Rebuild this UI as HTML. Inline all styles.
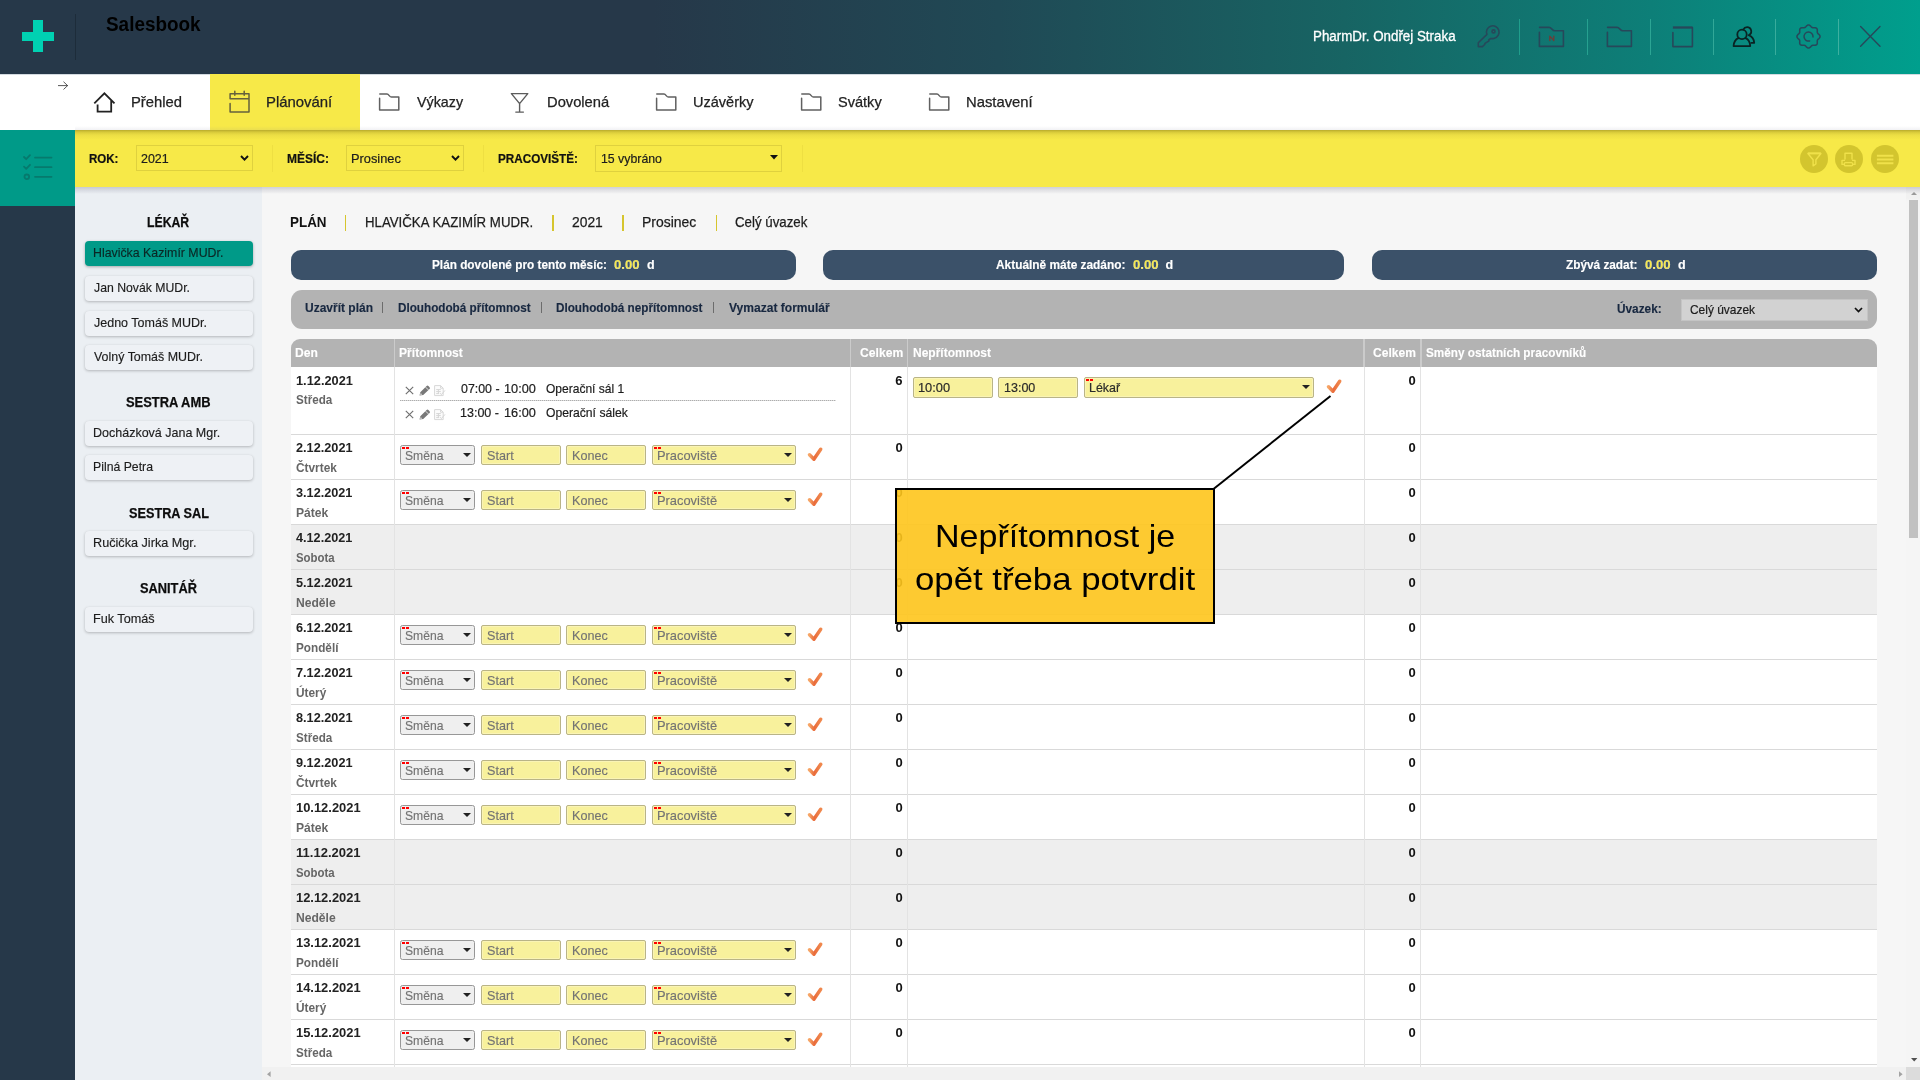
<!DOCTYPE html>
<html lang="cs"><head><meta charset="utf-8"><title>Salesbook</title>
<style>
*{box-sizing:border-box;margin:0;padding:0}
html,body{width:1920px;height:1080px;overflow:hidden;background:#f6f6f6}
body{font-family:"Liberation Sans",sans-serif;font-size:13px;color:#222}
#app{position:relative;width:1920px;height:1080px;overflow:hidden;will-change:transform}
.abs{position:absolute}
.t{position:absolute;white-space:nowrap;line-height:1;transform:translateY(-50%);transform-origin:0 50%}
svg{position:absolute;overflow:visible}

/* top header */
#hdr{position:absolute;left:0;top:0;width:1920px;height:74px;background:linear-gradient(90deg,#263849 0%,#263849 34%,#204955 52%,#176463 70%,#0d7f78 86%,#009f8d 100%)}
#hdr .sep{position:absolute;top:19px;width:1.4px;height:36px;background:rgba(70,205,185,.5)}
.brand{color:#000}
.user{color:#fff;-webkit-text-stroke:.3px #fff}

/* nav */
#nav{position:absolute;left:0;top:74px;width:1920px;height:56px;background:#fff;border-top:1px solid #d3dae0}
#nav .act{position:absolute;left:210px;top:-1px;width:150px;height:56px;background:#f7e948}
#nav:after{content:"";position:absolute;left:75px;right:0;bottom:0;height:4px;background:linear-gradient(rgba(120,120,150,0),rgba(120,120,150,.10))}
.nv{color:#222;-webkit-text-stroke:.25px #222}

/* filter bar */
#fbar{position:absolute;left:75px;top:130px;width:1845px;height:57px;background:#f7e948}
#fbar:before{content:"";position:absolute;left:0;top:0;width:100%;height:10px;background:linear-gradient(#b7a92c 0,#c9bb33 10%,#ded03d 28%,#ecde44 50%,#f7e948 100%)}
#tealblk{position:absolute;left:0;top:130px;width:75px;height:76px;background:#009a88}
#darkside{position:absolute;left:0;top:205.5px;width:75px;height:875px;background:#263849}
.fl{color:#111;-webkit-text-stroke:.2px #111}
.fsel{position:absolute;top:15px;height:26px;border:1px solid #dfd13e;background:#f7e948}
.fs{color:#1c1c1c;-webkit-text-stroke:.2px #1c1c1c}
.fdiv{position:absolute;top:15px;width:1px;height:27px;background:#eedf42}
.circ{position:absolute;top:15px;width:28px;height:28px;border-radius:50%;background:#d3c52e}

/* left list panel */
#lpanel{position:absolute;left:75px;top:187px;width:187px;height:893px;background:#ebeff3}
.lh{color:#0c0c0c;-webkit-text-stroke:.25px #0c0c0c}
.lb{position:absolute;left:85px;width:168px;height:25px;border-radius:4px;background:#eef1f5;box-shadow:0 1px 3px rgba(0,0,0,.24),0 0 1px rgba(0,0,0,.08)}
.lb.sel{background:#009a88;box-shadow:0 1px 3px rgba(0,0,0,.3)}
.lbt{color:#1c1c1c;-webkit-text-stroke:.15px #1c1c1c}
.lbt.s{color:#0b2725;-webkit-text-stroke:.15px #0b2725}

/* content */
#content{position:absolute;left:262px;top:187px;width:1644px;height:893px;background:#f6f6f6}
.pt{color:#1c1c1c;-webkit-text-stroke:.25px #1c1c1c}
.ptb{color:#111}
.psep{position:absolute;top:214.5px;width:1.8px;height:16.5px;background:#d6c52e}
.ibar{position:absolute;top:250px;height:30px;border-radius:10px;background:#3b5169}
.ib{color:#fff;-webkit-text-stroke:.15px #fff}
.ib.y{color:#f7e948}
#abar{position:absolute;left:291px;top:290px;width:1586px;height:39px;border-radius:11px;background:#b3b3b3}
.ab{color:#182840;-webkit-text-stroke:.15px #182840}
.absep{font-size:12px;color:#555}
#usel{position:absolute;left:1681px;top:299px;width:187px;height:22px;background:#d2d2d2;border:1px solid #c4c4c4}

/* table */
#thead{position:absolute;left:291px;top:339px;width:1586px;height:28px;background:#b3b3b3;border-radius:9px 9px 0 0}
.th{color:#fff;-webkit-text-stroke:.12px #fff}
.thsep{position:absolute;top:339px;width:1.6px;height:28px;background:#cbcbcb}
.row{position:absolute;left:291px;width:1586px;background:#fff;border-bottom:1px solid #d9d9d9}
.row.we{background:#eeeeee}
.vl{position:absolute;top:367px;width:1px;height:700px;background:#e3e3e3}
.dt{color:#222}
.dn{color:#666}
.tot{color:#111}
.inp{position:absolute;height:20px;background:#f8f19c;border:1px solid #b9b487;border-radius:2px;box-shadow:inset 0 0 0 1px rgba(255,255,255,.25)}
.it{color:#737373;-webkit-text-stroke:.15px #737373}
.it.v{color:#2a2a2a;-webkit-text-stroke:.2px #2a2a2a}
.ssel{position:absolute;height:20px;background:#efefef;border:1px solid #979797;border-radius:2.5px}
.req{position:absolute;left:1px;top:1px;width:7px;height:2px;background:linear-gradient(90deg,#f00 0,#f00 3px,transparent 3px,transparent 4px,#f00 4px)}
.dd{position:absolute;right:3px;top:7px;width:0;height:0;border-left:4px solid transparent;border-right:4px solid transparent;border-top:4.5px solid #222}
.sh{color:#1c1c1c;-webkit-text-stroke:.2px #1c1c1c}

/* scrollbars */
#vsb{position:absolute;left:1906px;top:187px;width:14px;height:880px;background:linear-gradient(#f1f1f1 0,#f1f1f1 11px,#f5f5f5 14px,#f5f5f5 100%)}
#vsb .th2{position:absolute;left:3px;top:13px;width:9px;height:338px;background:#c1c1c1}
#hsb{position:absolute;left:262px;top:1067px;width:1658px;height:13px;background:#f1f1f1}
#corner{position:absolute;left:1906px;top:1067px;width:14px;height:13px;background:#dcdcdc}

/* overlay callout */
#callout{position:absolute;left:895px;top:488px;width:320px;height:136px;background:rgba(254,197,28,.90);border:2px solid #000}
.co{color:#000}

.brand{font-size:20px;font-weight:bold;}
.user{font-size:14px;}
.nv{font-size:15px;}
.fl{font-size:12.5px;font-weight:bold;}
.fs{font-size:13px;}
.lh{font-size:14.5px;font-weight:bold;}
.lbt{font-size:13px;}
.pt{font-size:15px;}
.ptb{font-size:15px;font-weight:bold;}
.ib{font-size:12.5px;font-weight:bold;}
.ab{font-size:12.5px;font-weight:bold;}
.th{font-size:12.5px;font-weight:bold;}
.dt{font-size:13px;font-weight:bold;}
.dn{font-size:13px;font-weight:bold;}
.tot{font-size:13px;font-weight:bold;}
.it{font-size:13.5px;}
.sh{font-size:13px;}
.co{font-size:30.5px;}
</style></head>
<body>
<div id="app">
<div id="hdr">
<div class="abs" style="left:33px;top:20px;width:10px;height:32px;background:#00d1b2"></div>
<div class="abs" style="left:22px;top:32px;width:32px;height:9px;background:#00d1b2"></div>
<div class="abs" style="left:75px;top:14px;width:1px;height:46px;background:#1d2c3a"></div>
<span class="t brand" style="left:106.43px;top:24px;transform:translateY(-50%) scaleX(0.9457);">Salesbook</span>
<span class="t user" style="left:1313.33px;top:36.3px;transform:translateY(-50%) scaleX(0.9544);">PharmDr. Ondřej Straka</span>
<div class="sep" style="left:1518.8px;background:rgb(32, 158, 140)"></div>
<div class="sep" style="left:1586.8px;background:rgb(38, 161, 144)"></div>
<div class="sep" style="left:1649.8px;background:rgb(44, 165, 148)"></div>
<div class="sep" style="left:1712.8px;background:rgb(50, 168, 152)"></div>
<div class="sep" style="left:1774.8px;background:rgb(56, 172, 156)"></div>
<div class="sep" style="left:1837.8px;background:rgb(62, 176, 160)"></div>
<svg style="left:1476px;top:24px" width="26" height="25" viewBox="0 0 26 25" fill="none" stroke="#27485a" stroke-width="1.6" stroke-linecap="round" stroke-linejoin="round"><path d="M10.9 10.4 A6.3 6.3 0 1 1 18.4 14.15 Q16.2 14.9 14.7 14.5 L12.7 15.9 L13 16.9 L9 19.4 L8.7 20.5 L6.4 22.6 H2.3 V18.8 Z"/><circle cx="17.5" cy="7.4" r="1.5"/></svg>
<svg style="left:1538px;top:26px" width="27" height="22" viewBox="0 0 27 22" fill="none" stroke="#27485a" stroke-width="1.6" stroke-linecap="round" stroke-linejoin="round"><path d="M1.4 6.2 V20.4 H25.4 V4.8 H16.6 C14.2 4.8 13.6 1.4 11 1.4 H1.6"/><path d="M11.8 14.5 V10.1 L15.8 14.5 V10.1" stroke="#6e3d38" stroke-width="1.3"/></svg>
<svg style="left:1605.5px;top:26px" width="27" height="22" viewBox="0 0 27 22" fill="none" stroke="#27485a" stroke-width="1.6" stroke-linecap="round" stroke-linejoin="round"><path d="M1.4 6.2 V20.4 H25.4 V4.8 H16.6 C14.2 4.8 13.6 1.4 11 1.4 H1.6"/></svg>
<svg style="left:1671.5px;top:26px" width="22" height="22" viewBox="0 0 22 22" fill="none" stroke="#27485a" stroke-width="1.6" stroke-linecap="round" stroke-linejoin="round"><path d="M0.9 6.6 V20.6 H20.4 V1.6"/><path d="M0.9 1.5 H20.4" stroke-width="2.3" stroke-linecap="butt"/></svg>
<svg style="left:1732px;top:26px" width="24" height="22" viewBox="0 0 24 22" fill="none" stroke="#0a2323" stroke-width="1.8" stroke-linecap="round" stroke-linejoin="round"><circle cx="10" cy="8.4" r="4.7"/><path d="M6.4 12.2 C3.6 13.4 1.8 16.4 1.6 20.1 H18.2 C18 16.4 16.4 13.4 13.6 12.2"/><path d="M11.4 3.4 C12.8 0.4 17.4 0.2 18.8 3.4 C19.8 5.8 18.8 8.2 16.6 9.2 C19.8 10.2 21.8 13 22.2 16.8 H19.4"/></svg>
<svg style="left:1795.6px;top:24.2px" width="25" height="25" viewBox="0 0 25 25" fill="none" stroke="#27485a" stroke-width="1.5" stroke-linejoin="round"><path d="M12.50 0.95 L13.25 1.10 L13.95 1.52 L14.57 2.10 L15.12 2.72 L15.64 3.24 L16.19 3.58 L16.82 3.73 L17.56 3.73 L18.39 3.69 L19.24 3.71 L20.03 3.91 L20.67 4.33 L21.09 4.97 L21.29 5.76 L21.31 6.61 L21.27 7.44 L21.27 8.18 L21.42 8.81 L21.76 9.36 L22.28 9.88 L22.90 10.43 L23.48 11.05 L23.90 11.75 L24.05 12.50 L23.90 13.25 L23.48 13.95 L22.90 14.57 L22.28 15.12 L21.76 15.64 L21.42 16.19 L21.27 16.82 L21.27 17.56 L21.31 18.39 L21.29 19.24 L21.09 20.03 L20.67 20.67 L20.03 21.09 L19.24 21.29 L18.39 21.31 L17.56 21.27 L16.82 21.27 L16.19 21.42 L15.64 21.76 L15.12 22.28 L14.57 22.90 L13.95 23.48 L13.25 23.90 L12.50 24.05 L11.75 23.90 L11.05 23.48 L10.43 22.90 L9.88 22.28 L9.36 21.76 L8.81 21.42 L8.18 21.27 L7.44 21.27 L6.61 21.31 L5.76 21.29 L4.97 21.09 L4.33 20.67 L3.91 20.03 L3.71 19.24 L3.69 18.39 L3.73 17.56 L3.73 16.82 L3.58 16.19 L3.24 15.64 L2.72 15.12 L2.10 14.57 L1.52 13.95 L1.10 13.25 L0.95 12.50 L1.10 11.75 L1.52 11.05 L2.10 10.43 L2.72 9.88 L3.24 9.36 L3.58 8.81 L3.73 8.18 L3.73 7.44 L3.69 6.61 L3.71 5.76 L3.91 4.97 L4.33 4.33 L4.97 3.91 L5.76 3.71 L6.61 3.69 L7.44 3.73 L8.18 3.73 L8.81 3.58 L9.36 3.24 L9.88 2.72 L10.43 2.10 L11.05 1.52 L11.75 1.10 Z"/><path d="M17 12.9 A4.5 4.5 0 1 0 13.6 16.9" stroke-linecap="round"/></svg>
<svg style="left:1860px;top:26px" width="22" height="22" viewBox="0 0 22 22" fill="none" stroke="#27485a" stroke-width="1.4" stroke-linecap="round"><path d="M0.6 0.6 L20 20.2 M20 0.6 L0.6 20.2"/></svg>
</div>
<div id="nav"><div class="act"></div></div>
<svg style="left:57px;top:81px" width="12" height="10" viewBox="0 0 12 10" fill="none" stroke="#444" stroke-width=".9" stroke-linecap="round" stroke-linejoin="round"><path d="M1.4 4.6 H10.6 M6.8 1 L10.6 4.6 L6.8 8.2"/></svg>
<svg style="left:93px;top:91px" width="24" height="23" viewBox="0 0 24 23" fill="none" stroke="#222" stroke-width="1.8" stroke-linejoin="miter"><path d="M1.3 12.3 L11.4 2.3 L21.5 12.3 M4.6 13.6 V20.7 H18.2 V9.2"/></svg>
<span class="t nv" style="left:131.22px;top:101px;transform:translateY(-50%) scaleX(0.9859);">Přehled</span>
<svg style="left:229px;top:90px" width="22" height="24" viewBox="0 0 22 24" fill="none" stroke="#65613c" stroke-width="1.5" stroke-linejoin="round" stroke-linecap="round"><path d="M1.1 13.6 V22.1 H20 V3.8 H1.1 V8.7 H20"/><path d="M5.8 1.2 V5.2 M15.2 1.2 V5.2"/></svg>
<span class="t nv" style="left:265.71px;top:101px;transform:translateY(-50%) scaleX(0.9927);">Plánování</span>
<svg style="left:378px;top:93px" width="22" height="18" viewBox="0 0 22 18" fill="none" stroke="#606060" stroke-width="1.5" stroke-linejoin="round" stroke-linecap="round"><path d="M1.6 5.2 V16.9 H20.8 V4.1 H13.4 C11.4 4.1 11 1.1 9 1.1 H1.8"/></svg>
<svg style="left:655px;top:93px" width="22" height="18" viewBox="0 0 22 18" fill="none" stroke="#606060" stroke-width="1.5" stroke-linejoin="round" stroke-linecap="round"><path d="M1.6 5.2 V16.9 H20.8 V4.1 H13.4 C11.4 4.1 11 1.1 9 1.1 H1.8"/></svg>
<svg style="left:800px;top:93px" width="22" height="18" viewBox="0 0 22 18" fill="none" stroke="#606060" stroke-width="1.5" stroke-linejoin="round" stroke-linecap="round"><path d="M1.6 5.2 V16.9 H20.8 V4.1 H13.4 C11.4 4.1 11 1.1 9 1.1 H1.8"/></svg>
<svg style="left:928px;top:93px" width="22" height="18" viewBox="0 0 22 18" fill="none" stroke="#606060" stroke-width="1.5" stroke-linejoin="round" stroke-linecap="round"><path d="M1.6 5.2 V16.9 H20.8 V4.1 H13.4 C11.4 4.1 11 1.1 9 1.1 H1.8"/></svg>
<span class="t nv" style="left:416.83px;top:101px;transform:translateY(-50%) scaleX(0.9524);">Výkazy</span>
<svg style="left:509.5px;top:92px" width="20" height="22" viewBox="0 0 20 22" fill="none" stroke="#5c5c5c" stroke-width="1.4" stroke-linejoin="round" stroke-linecap="round"><path d="M1.4 1.6 H17.8 L9.6 11.6 Z M9.6 11.6 V20 M5.8 20.1 H13.4"/></svg>
<span class="t nv" style="left:546.72px;top:101px;transform:translateY(-50%) scaleX(0.9811);">Dovolená</span>
<span class="t nv" style="left:693.31px;top:101px;transform:translateY(-50%) scaleX(0.9687);">Uzávěrky</span>
<span class="t nv" style="left:838.25px;top:101px;transform:translateY(-50%) scaleX(0.9701);">Svátky</span>
<span class="t nv" style="left:966.21px;top:101px;transform:translateY(-50%) scaleX(0.9879);">Nastavení</span>
<div id="tealblk"></div><div id="darkside"></div>
<svg style="left:22px;top:153px" width="32" height="30" viewBox="0 0 32 30" fill="none" stroke="#067a6d" stroke-width="1.8" stroke-linecap="round" stroke-linejoin="round"><path d="M2 4 L4.2 6.2 L8 2.2 M13 4.6 H29.5 M2 13.6 L4.2 15.8 L8 11.8 M13 14.2 H29.5 M13 23.8 H29.5"/><circle cx="4.8" cy="23.8" r="2.3"/></svg>
<div id="fbar">
<div class="fdiv" style="left:197px"></div><div class="fdiv" style="left:408px"></div><div class="fdiv" style="left:727px"></div>
<div class="fsel" style="left:61px;width:117px"></div>
<div class="fsel" style="left:271px;width:118px"></div>
<div class="fsel" style="left:520px;width:187px;height:26.6px"></div>
<div class="circ" style="left:1724.6px"></div><div class="circ" style="left:1759.6px"></div><div class="circ" style="left:1795.8px"></div>
</div>
<span class="t fs" style="left:140.78px;top:157.7px;transform:translateY(-50%) scaleX(0.9570);">2021</span>
<span class="t fs" style="left:350.87px;top:157.7px;transform:translateY(-50%) scaleX(0.9857);">Prosinec</span>
<span class="t fs" style="left:600.98px;top:157.7px;transform:translateY(-50%) scaleX(0.9476);">15 vybráno</span>
<span class="t fl" style="left:89.15px;top:158.5px;transform:translateY(-50%) scaleX(0.9205);">ROK:</span>
<span class="t fl" style="left:287.12px;top:158.5px;transform:translateY(-50%) scaleX(0.9595);">MĚSÍC:</span>
<span class="t fl" style="left:497.64px;top:158.5px;transform:translateY(-50%) scaleX(0.9355);">PRACOVIŠTĚ:</span>
<svg style="left:239.5px;top:155px" width="9" height="6" viewBox="0 0 9 6" fill="none" stroke="#111" stroke-width="1.9"><path d="M1 1 L4.5 4.6 L8 1"/></svg>
<svg style="left:450.5px;top:155px" width="9" height="6" viewBox="0 0 9 6" fill="none" stroke="#111" stroke-width="1.9"><path d="M1 1 L4.5 4.6 L8 1"/></svg>
<svg style="left:770px;top:155px" width="8" height="5" viewBox="0 0 8 5"><path d="M0 0 H8 L4 4.6 Z" fill="#111"/></svg>
<svg style="left:1806.6px;top:152px" width="15" height="16" viewBox="0 0 15 16" fill="none" stroke="#f0e14a" stroke-width="1.4" stroke-linejoin="round"><path d="M0.9 1.5 H13.9 L8.9 7.8 V12 L6.1 13.8 V7.8 Z"/><path d="M0.9 1.3 H13.9" stroke-width="1.8"/></svg>
<svg style="left:1839.8px;top:151px" width="17" height="16" viewBox="0 0 17 16" fill="none" stroke="#f0e14a" stroke-width="1.4" stroke-linejoin="round"><path d="M5 8.4 V2.2 H12 V8.4 M5 9.4 H2 V13.4 H4.4 M12.6 13.4 H15 V9.4 H12"/><rect x="4.4" y="11.6" width="8.2" height="3.2" rx="1"/></svg>
<svg style="left:1876px;top:153px" width="18" height="12" viewBox="0 0 18 12" fill="none" stroke="#f0e14a" stroke-width="1.9"><path d="M0.9 2.8 H17.4 M0.9 6.5 H17.4 M0.9 10.2 H17.4"/></svg>
<div id="lpanel"></div>
<span class="t lh" style="left:147.20px;top:221.5px;transform:translateY(-50%) scaleX(0.8449);">LÉKAŘ</span>
<div class="lb sel" style="top:241px"></div>
<span class="t lbt s" style="left:92.71px;top:252.3px;transform:translateY(-50%) scaleX(0.9496);">Hlavička Kazimír MUDr.</span>
<div class="lb" style="top:276px"></div>
<span class="t lbt" style="left:93.52px;top:287.3px;transform:translateY(-50%) scaleX(0.9424);">Jan Novák MUDr.</span>
<div class="lb" style="top:310.5px"></div>
<span class="t lbt" style="left:93.51px;top:321.8px;transform:translateY(-50%) scaleX(0.9616);">Jedno Tomáš MUDr.</span>
<div class="lb" style="top:345px"></div>
<span class="t lbt" style="left:93.64px;top:356.3px;transform:translateY(-50%) scaleX(0.9561);">Volný Tomáš MUDr.</span>
<span class="t lh" style="left:126.31px;top:402.1px;transform:translateY(-50%) scaleX(0.8914);">SESTRA AMB</span>
<div class="lb" style="top:420.5px"></div>
<span class="t lbt" style="left:92.70px;top:431.8px;transform:translateY(-50%) scaleX(0.9615);">Docházková Jana Mgr.</span>
<div class="lb" style="top:455px"></div>
<span class="t lbt" style="left:92.72px;top:466.3px;transform:translateY(-50%) scaleX(0.9435);">Pilná Petra</span>
<span class="t lh" style="left:129.12px;top:512.5px;transform:translateY(-50%) scaleX(0.8749);">SESTRA SAL</span>
<div class="lb" style="top:531px"></div>
<span class="t lbt" style="left:92.69px;top:542.3px;transform:translateY(-50%) scaleX(0.9737);">Ručička Jirka Mgr.</span>
<span class="t lh" style="left:140.12px;top:588.3px;transform:translateY(-50%) scaleX(0.8829);">SANITÁŘ</span>
<div class="lb" style="top:607px"></div>
<span class="t lbt" style="left:92.69px;top:618.3px;transform:translateY(-50%) scaleX(0.9723);">Fuk Tomáš</span>
<div id="content"></div>
<div class="abs" style="z-index:5;left:75px;top:187px;width:1845px;height:7px;background:linear-gradient(rgba(90,90,115,.24),rgba(90,90,115,0))"></div>
<span class="t ptb" style="left:290.23px;top:221.1px;transform:translateY(-50%) scaleX(0.8958);">PLÁN</span>
<span class="t pt" style="left:365.34px;top:221.1px;transform:translateY(-50%) scaleX(0.8829);">HLAVIČKA KAZIMÍR MUDR.</span>
<span class="t pt" style="left:572.21px;top:221.1px;transform:translateY(-50%) scaleX(0.9233);">2021</span>
<span class="t pt" style="left:642.28px;top:221.1px;transform:translateY(-50%) scaleX(0.9300);">Prosinec</span>
<span class="t pt" style="left:735.24px;top:221.1px;transform:translateY(-50%) scaleX(0.8860);">Celý úvazek</span>
<div class="psep" style="left:344.5px"></div>
<div class="psep" style="left:552px"></div>
<div class="psep" style="left:622px"></div>
<div class="psep" style="left:715.5px"></div>
<div class="ibar" style="left:291px;width:505px"></div>
<div class="ibar" style="left:823px;width:521px"></div>
<div class="ibar" style="left:1372px;width:505px"></div>
<span class="t ib" style="left:432.43px;top:265px;transform:translateY(-50%) scaleX(0.9431);">Plán dovolené pro tento měsíc:</span>
<span class="t ib y" style="left:614.17px;top:265px;transform:translateY(-50%) scaleX(1.0509);">0.00</span>
<span class="t ib" style="left:646.90px;top:265px;">d</span>
<span class="t ib" style="left:996.10px;top:265px;transform:translateY(-50%) scaleX(0.9508);">Aktuálně máte zadáno:</span>
<span class="t ib y" style="left:1132.87px;top:265px;transform:translateY(-50%) scaleX(1.0509);">0.00</span>
<span class="t ib" style="left:1165.40px;top:265px;">d</span>
<span class="t ib" style="left:1566.05px;top:265px;transform:translateY(-50%) scaleX(0.9444);">Zbývá zadat:</span>
<span class="t ib y" style="left:1644.87px;top:265px;transform:translateY(-50%) scaleX(1.0509);">0.00</span>
<span class="t ib" style="left:1677.90px;top:265px;">d</span>
<div id="abar"></div>
<span class="t ab" style="left:304.68px;top:307.5px;transform:translateY(-50%) scaleX(0.9594);">Uzavřít plán</span>
<span class="t ab" style="left:397.94px;top:307.5px;transform:translateY(-50%) scaleX(0.9361);">Dlouhodobá přítomnost</span>
<span class="t ab" style="left:556.34px;top:307.5px;transform:translateY(-50%) scaleX(0.9372);">Dlouhodobá nepřítomnost</span>
<span class="t ab" style="left:729.34px;top:307.5px;transform:translateY(-50%) scaleX(0.9638);">Vymazat formulář</span>
<div class="abs" style="left:382px;top:302px;width:1px;height:11px;background:#6c6c6c"></div>
<div class="abs" style="left:541px;top:302px;width:1px;height:11px;background:#6c6c6c"></div>
<div class="abs" style="left:713px;top:302px;width:1px;height:11px;background:#6c6c6c"></div>
<span class="t ab" style="left:1617.29px;top:308.9px;transform:translateY(-50%) scaleX(0.9459);">Úvazek:</span>
<div id="usel"></div>
<span class="t fs" style="left:1690.40px;top:309.2px;transform:translateY(-50%) scaleX(0.9182);">Celý úvazek</span>
<svg style="left:1854px;top:307px" width="9" height="6" viewBox="0 0 9 6" fill="none" stroke="#111" stroke-width="1.7"><path d="M1 1 L4.5 4.6 L8 1"/></svg>
<div id="thead"></div>
<div class="thsep" style="left:393.5px"></div>
<div class="thsep" style="left:849.5px"></div>
<div class="thsep" style="left:906.5px"></div>
<div class="thsep" style="left:1363px"></div>
<div class="thsep" style="left:1420px"></div>
<span class="t th" style="left:295.21px;top:353px;transform:translateY(-50%) scaleX(0.9700);">Den</span>
<span class="t th" style="left:399.01px;top:353px;transform:translateY(-50%) scaleX(0.9677);">Přítomnost</span>
<span class="t th" style="left:859.51px;top:353px;transform:translateY(-50%) scaleX(0.9711);">Celkem</span>
<span class="t th" style="left:912.82px;top:353px;transform:translateY(-50%) scaleX(0.9595);">Nepřítomnost</span>
<span class="t th" style="left:1372.62px;top:353px;transform:translateY(-50%) scaleX(0.9642);">Celkem</span>
<span class="t th" style="left:1426.45px;top:353px;transform:translateY(-50%) scaleX(0.9408);">Směny ostatních pracovníků</span>
<svg style="left:0;top:0" width="0" height="0"><defs><linearGradient id="cg" x1="0" y1="0" x2="1" y2="0"><stop offset="0" stop-color="#f6a465"/><stop offset=".42" stop-color="#e96b3b"/><stop offset="1" stop-color="#f0884d"/></linearGradient></defs></svg>
<div class="row" style="top:367px;height:68px"></div>
<span class="t dt" style="left:295.63px;top:380.4px;transform:translateY(-50%) scaleX(0.9833);">1.12.2021</span>
<span class="t dn" style="left:296.05px;top:399.3px;transform:translateY(-50%) scaleX(0.8962);">Středa</span>
<span class="t tot" style="left:895.34px;top:379.9px;">6</span>
<span class="t tot" style="left:1408.41px;top:379.9px;">0</span>
<div class="row" style="top:435px;height:45px"></div>
<span class="t dt" style="left:295.96px;top:446.8px;transform:translateY(-50%) scaleX(0.9777);">2.12.2021</span>
<span class="t dn" style="left:295.93px;top:466.9px;transform:translateY(-50%) scaleX(0.9127);">Čtvrtek</span>
<span class="t tot" style="left:895.41px;top:447.1px;">0</span>
<span class="t tot" style="left:1408.41px;top:447.1px;">0</span>
<div class="ssel" style="left:400px;top:445px;width:75px"><i class="req"></i><i class="dd"></i></div>
<div class="inp" style="left:481px;top:445px;width:80px"></div>
<div class="inp" style="left:566px;top:445px;width:80px"></div>
<div class="inp" style="left:652px;top:445px;width:144px"><i class="req"></i><i class="dd"></i></div>
<span class="t it" style="left:405.15px;top:455.5px;transform:translateY(-50%) scaleX(0.8998);">Směna</span>
<span class="t it" style="left:487.03px;top:455.5px;transform:translateY(-50%) scaleX(0.9349);">Start</span>
<span class="t it" style="left:571.99px;top:455.5px;transform:translateY(-50%) scaleX(0.9334);">Konec</span>
<span class="t it" style="left:657.17px;top:455.5px;transform:translateY(-50%) scaleX(0.9528);">Pracoviště</span>
<svg style="left:807px;top:446.6px" width="16" height="15" viewBox="0 0 16 15" fill="none" stroke="url(#cg)" stroke-width="3.5" stroke-linecap="round" stroke-linejoin="round"><path d="M2.5 7.8 L6.9 12.2 L13.7 2.3"/></svg>
<div class="row" style="top:480px;height:45px"></div>
<span class="t dt" style="left:296.08px;top:491.8px;transform:translateY(-50%) scaleX(0.9755);">3.12.2021</span>
<span class="t dn" style="left:295.61px;top:511.9px;transform:translateY(-50%) scaleX(0.9320);">Pátek</span>
<span class="t tot" style="left:895.41px;top:492.1px;">0</span>
<span class="t tot" style="left:1408.41px;top:492.1px;">0</span>
<div class="ssel" style="left:400px;top:490px;width:75px"><i class="req"></i><i class="dd"></i></div>
<div class="inp" style="left:481px;top:490px;width:80px"></div>
<div class="inp" style="left:566px;top:490px;width:80px"></div>
<div class="inp" style="left:652px;top:490px;width:144px"><i class="req"></i><i class="dd"></i></div>
<span class="t it" style="left:405.15px;top:500.5px;transform:translateY(-50%) scaleX(0.8998);">Směna</span>
<span class="t it" style="left:487.03px;top:500.5px;transform:translateY(-50%) scaleX(0.9349);">Start</span>
<span class="t it" style="left:571.99px;top:500.5px;transform:translateY(-50%) scaleX(0.9334);">Konec</span>
<span class="t it" style="left:657.17px;top:500.5px;transform:translateY(-50%) scaleX(0.9528);">Pracoviště</span>
<svg style="left:807px;top:491.6px" width="16" height="15" viewBox="0 0 16 15" fill="none" stroke="url(#cg)" stroke-width="3.5" stroke-linecap="round" stroke-linejoin="round"><path d="M2.5 7.8 L6.9 12.2 L13.7 2.3"/></svg>
<div class="row we" style="top:525px;height:45px"></div>
<span class="t dt" style="left:296.21px;top:536.8px;transform:translateY(-50%) scaleX(0.9733);">4.12.2021</span>
<span class="t dn" style="left:296.06px;top:556.9px;transform:translateY(-50%) scaleX(0.8788);">Sobota</span>
<span class="t tot" style="left:895.41px;top:537.1px;">0</span>
<span class="t tot" style="left:1408.41px;top:537.1px;">0</span>
<div class="row we" style="top:570px;height:45px"></div>
<span class="t dt" style="left:296.02px;top:581.8px;transform:translateY(-50%) scaleX(0.9766);">5.12.2021</span>
<span class="t dn" style="left:295.61px;top:601.9px;transform:translateY(-50%) scaleX(0.9313);">Neděle</span>
<span class="t tot" style="left:895.41px;top:582.1px;">0</span>
<span class="t tot" style="left:1408.41px;top:582.1px;">0</span>
<div class="row" style="top:615px;height:45px"></div>
<span class="t dt" style="left:295.96px;top:626.8px;transform:translateY(-50%) scaleX(0.9777);">6.12.2021</span>
<span class="t dn" style="left:295.64px;top:646.9px;transform:translateY(-50%) scaleX(0.9037);">Pondělí</span>
<span class="t tot" style="left:895.41px;top:627.1px;">0</span>
<span class="t tot" style="left:1408.41px;top:627.1px;">0</span>
<div class="ssel" style="left:400px;top:625px;width:75px"><i class="req"></i><i class="dd"></i></div>
<div class="inp" style="left:481px;top:625px;width:80px"></div>
<div class="inp" style="left:566px;top:625px;width:80px"></div>
<div class="inp" style="left:652px;top:625px;width:144px"><i class="req"></i><i class="dd"></i></div>
<span class="t it" style="left:405.15px;top:635.5px;transform:translateY(-50%) scaleX(0.8998);">Směna</span>
<span class="t it" style="left:487.03px;top:635.5px;transform:translateY(-50%) scaleX(0.9349);">Start</span>
<span class="t it" style="left:571.99px;top:635.5px;transform:translateY(-50%) scaleX(0.9334);">Konec</span>
<span class="t it" style="left:657.17px;top:635.5px;transform:translateY(-50%) scaleX(0.9528);">Pracoviště</span>
<svg style="left:807px;top:626.6px" width="16" height="15" viewBox="0 0 16 15" fill="none" stroke="url(#cg)" stroke-width="3.5" stroke-linecap="round" stroke-linejoin="round"><path d="M2.5 7.8 L6.9 12.2 L13.7 2.3"/></svg>
<div class="row" style="top:660px;height:45px"></div>
<span class="t dt" style="left:295.89px;top:671.8px;transform:translateY(-50%) scaleX(0.9789);">7.12.2021</span>
<span class="t dn" style="left:295.69px;top:691.9px;transform:translateY(-50%) scaleX(0.9113);">Úterý</span>
<span class="t tot" style="left:895.41px;top:672.1px;">0</span>
<span class="t tot" style="left:1408.41px;top:672.1px;">0</span>
<div class="ssel" style="left:400px;top:670px;width:75px"><i class="req"></i><i class="dd"></i></div>
<div class="inp" style="left:481px;top:670px;width:80px"></div>
<div class="inp" style="left:566px;top:670px;width:80px"></div>
<div class="inp" style="left:652px;top:670px;width:144px"><i class="req"></i><i class="dd"></i></div>
<span class="t it" style="left:405.15px;top:680.5px;transform:translateY(-50%) scaleX(0.8998);">Směna</span>
<span class="t it" style="left:487.03px;top:680.5px;transform:translateY(-50%) scaleX(0.9349);">Start</span>
<span class="t it" style="left:571.99px;top:680.5px;transform:translateY(-50%) scaleX(0.9334);">Konec</span>
<span class="t it" style="left:657.17px;top:680.5px;transform:translateY(-50%) scaleX(0.9528);">Pracoviště</span>
<svg style="left:807px;top:671.6px" width="16" height="15" viewBox="0 0 16 15" fill="none" stroke="url(#cg)" stroke-width="3.5" stroke-linecap="round" stroke-linejoin="round"><path d="M2.5 7.8 L6.9 12.2 L13.7 2.3"/></svg>
<div class="row" style="top:705px;height:45px"></div>
<span class="t dt" style="left:296.02px;top:716.8px;transform:translateY(-50%) scaleX(0.9766);">8.12.2021</span>
<span class="t dn" style="left:296.05px;top:736.9px;transform:translateY(-50%) scaleX(0.8962);">Středa</span>
<span class="t tot" style="left:895.41px;top:717.1px;">0</span>
<span class="t tot" style="left:1408.41px;top:717.1px;">0</span>
<div class="ssel" style="left:400px;top:715px;width:75px"><i class="req"></i><i class="dd"></i></div>
<div class="inp" style="left:481px;top:715px;width:80px"></div>
<div class="inp" style="left:566px;top:715px;width:80px"></div>
<div class="inp" style="left:652px;top:715px;width:144px"><i class="req"></i><i class="dd"></i></div>
<span class="t it" style="left:405.15px;top:725.5px;transform:translateY(-50%) scaleX(0.8998);">Směna</span>
<span class="t it" style="left:487.03px;top:725.5px;transform:translateY(-50%) scaleX(0.9349);">Start</span>
<span class="t it" style="left:571.99px;top:725.5px;transform:translateY(-50%) scaleX(0.9334);">Konec</span>
<span class="t it" style="left:657.17px;top:725.5px;transform:translateY(-50%) scaleX(0.9528);">Pracoviště</span>
<svg style="left:807px;top:716.6px" width="16" height="15" viewBox="0 0 16 15" fill="none" stroke="url(#cg)" stroke-width="3.5" stroke-linecap="round" stroke-linejoin="round"><path d="M2.5 7.8 L6.9 12.2 L13.7 2.3"/></svg>
<div class="row" style="top:750px;height:45px"></div>
<span class="t dt" style="left:295.96px;top:761.8px;transform:translateY(-50%) scaleX(0.9777);">9.12.2021</span>
<span class="t dn" style="left:295.93px;top:781.9px;transform:translateY(-50%) scaleX(0.9127);">Čtvrtek</span>
<span class="t tot" style="left:895.41px;top:762.1px;">0</span>
<span class="t tot" style="left:1408.41px;top:762.1px;">0</span>
<div class="ssel" style="left:400px;top:760px;width:75px"><i class="req"></i><i class="dd"></i></div>
<div class="inp" style="left:481px;top:760px;width:80px"></div>
<div class="inp" style="left:566px;top:760px;width:80px"></div>
<div class="inp" style="left:652px;top:760px;width:144px"><i class="req"></i><i class="dd"></i></div>
<span class="t it" style="left:405.15px;top:770.5px;transform:translateY(-50%) scaleX(0.8998);">Směna</span>
<span class="t it" style="left:487.03px;top:770.5px;transform:translateY(-50%) scaleX(0.9349);">Start</span>
<span class="t it" style="left:571.99px;top:770.5px;transform:translateY(-50%) scaleX(0.9334);">Konec</span>
<span class="t it" style="left:657.17px;top:770.5px;transform:translateY(-50%) scaleX(0.9528);">Pracoviště</span>
<svg style="left:807px;top:761.6px" width="16" height="15" viewBox="0 0 16 15" fill="none" stroke="url(#cg)" stroke-width="3.5" stroke-linecap="round" stroke-linejoin="round"><path d="M2.5 7.8 L6.9 12.2 L13.7 2.3"/></svg>
<div class="row" style="top:795px;height:45px"></div>
<span class="t dt" style="left:295.63px;top:806.8px;transform:translateY(-50%) scaleX(0.9928);">10.12.2021</span>
<span class="t dn" style="left:295.61px;top:826.9px;transform:translateY(-50%) scaleX(0.9320);">Pátek</span>
<span class="t tot" style="left:895.41px;top:807.1px;">0</span>
<span class="t tot" style="left:1408.41px;top:807.1px;">0</span>
<div class="ssel" style="left:400px;top:805px;width:75px"><i class="req"></i><i class="dd"></i></div>
<div class="inp" style="left:481px;top:805px;width:80px"></div>
<div class="inp" style="left:566px;top:805px;width:80px"></div>
<div class="inp" style="left:652px;top:805px;width:144px"><i class="req"></i><i class="dd"></i></div>
<span class="t it" style="left:405.15px;top:815.5px;transform:translateY(-50%) scaleX(0.8998);">Směna</span>
<span class="t it" style="left:487.03px;top:815.5px;transform:translateY(-50%) scaleX(0.9349);">Start</span>
<span class="t it" style="left:571.99px;top:815.5px;transform:translateY(-50%) scaleX(0.9334);">Konec</span>
<span class="t it" style="left:657.17px;top:815.5px;transform:translateY(-50%) scaleX(0.9528);">Pracoviště</span>
<svg style="left:807px;top:806.6px" width="16" height="15" viewBox="0 0 16 15" fill="none" stroke="url(#cg)" stroke-width="3.5" stroke-linecap="round" stroke-linejoin="round"><path d="M2.5 7.8 L6.9 12.2 L13.7 2.3"/></svg>
<div class="row we" style="top:840px;height:45px"></div>
<span class="t dt" style="left:295.62px;top:851.8px;transform:translateY(-50%) scaleX(1.0040);">11.12.2021</span>
<span class="t dn" style="left:296.06px;top:871.9px;transform:translateY(-50%) scaleX(0.8788);">Sobota</span>
<span class="t tot" style="left:895.41px;top:852.1px;">0</span>
<span class="t tot" style="left:1408.41px;top:852.1px;">0</span>
<div class="row we" style="top:885px;height:45px"></div>
<span class="t dt" style="left:295.63px;top:896.8px;transform:translateY(-50%) scaleX(0.9928);">12.12.2021</span>
<span class="t dn" style="left:295.61px;top:916.9px;transform:translateY(-50%) scaleX(0.9313);">Neděle</span>
<span class="t tot" style="left:895.41px;top:897.1px;">0</span>
<span class="t tot" style="left:1408.41px;top:897.1px;">0</span>
<div class="row" style="top:930px;height:45px"></div>
<span class="t dt" style="left:295.63px;top:941.8px;transform:translateY(-50%) scaleX(0.9928);">13.12.2021</span>
<span class="t dn" style="left:295.64px;top:961.9px;transform:translateY(-50%) scaleX(0.9037);">Pondělí</span>
<span class="t tot" style="left:895.41px;top:942.1px;">0</span>
<span class="t tot" style="left:1408.41px;top:942.1px;">0</span>
<div class="ssel" style="left:400px;top:940px;width:75px"><i class="req"></i><i class="dd"></i></div>
<div class="inp" style="left:481px;top:940px;width:80px"></div>
<div class="inp" style="left:566px;top:940px;width:80px"></div>
<div class="inp" style="left:652px;top:940px;width:144px"><i class="req"></i><i class="dd"></i></div>
<span class="t it" style="left:405.15px;top:950.5px;transform:translateY(-50%) scaleX(0.8998);">Směna</span>
<span class="t it" style="left:487.03px;top:950.5px;transform:translateY(-50%) scaleX(0.9349);">Start</span>
<span class="t it" style="left:571.99px;top:950.5px;transform:translateY(-50%) scaleX(0.9334);">Konec</span>
<span class="t it" style="left:657.17px;top:950.5px;transform:translateY(-50%) scaleX(0.9528);">Pracoviště</span>
<svg style="left:807px;top:941.6px" width="16" height="15" viewBox="0 0 16 15" fill="none" stroke="url(#cg)" stroke-width="3.5" stroke-linecap="round" stroke-linejoin="round"><path d="M2.5 7.8 L6.9 12.2 L13.7 2.3"/></svg>
<div class="row" style="top:975px;height:45px"></div>
<span class="t dt" style="left:295.63px;top:986.8px;transform:translateY(-50%) scaleX(0.9928);">14.12.2021</span>
<span class="t dn" style="left:295.69px;top:1006.9px;transform:translateY(-50%) scaleX(0.9113);">Úterý</span>
<span class="t tot" style="left:895.41px;top:987.1px;">0</span>
<span class="t tot" style="left:1408.41px;top:987.1px;">0</span>
<div class="ssel" style="left:400px;top:985px;width:75px"><i class="req"></i><i class="dd"></i></div>
<div class="inp" style="left:481px;top:985px;width:80px"></div>
<div class="inp" style="left:566px;top:985px;width:80px"></div>
<div class="inp" style="left:652px;top:985px;width:144px"><i class="req"></i><i class="dd"></i></div>
<span class="t it" style="left:405.15px;top:995.5px;transform:translateY(-50%) scaleX(0.8998);">Směna</span>
<span class="t it" style="left:487.03px;top:995.5px;transform:translateY(-50%) scaleX(0.9349);">Start</span>
<span class="t it" style="left:571.99px;top:995.5px;transform:translateY(-50%) scaleX(0.9334);">Konec</span>
<span class="t it" style="left:657.17px;top:995.5px;transform:translateY(-50%) scaleX(0.9528);">Pracoviště</span>
<svg style="left:807px;top:986.6px" width="16" height="15" viewBox="0 0 16 15" fill="none" stroke="url(#cg)" stroke-width="3.5" stroke-linecap="round" stroke-linejoin="round"><path d="M2.5 7.8 L6.9 12.2 L13.7 2.3"/></svg>
<div class="row" style="top:1020px;height:45px"></div>
<span class="t dt" style="left:295.63px;top:1031.8px;transform:translateY(-50%) scaleX(0.9928);">15.12.2021</span>
<span class="t dn" style="left:296.05px;top:1051.9px;transform:translateY(-50%) scaleX(0.8962);">Středa</span>
<span class="t tot" style="left:895.41px;top:1032.1px;">0</span>
<span class="t tot" style="left:1408.41px;top:1032.1px;">0</span>
<div class="ssel" style="left:400px;top:1030px;width:75px"><i class="req"></i><i class="dd"></i></div>
<div class="inp" style="left:481px;top:1030px;width:80px"></div>
<div class="inp" style="left:566px;top:1030px;width:80px"></div>
<div class="inp" style="left:652px;top:1030px;width:144px"><i class="req"></i><i class="dd"></i></div>
<span class="t it" style="left:405.15px;top:1040.5px;transform:translateY(-50%) scaleX(0.8998);">Směna</span>
<span class="t it" style="left:487.03px;top:1040.5px;transform:translateY(-50%) scaleX(0.9349);">Start</span>
<span class="t it" style="left:571.99px;top:1040.5px;transform:translateY(-50%) scaleX(0.9334);">Konec</span>
<span class="t it" style="left:657.17px;top:1040.5px;transform:translateY(-50%) scaleX(0.9528);">Pracoviště</span>
<svg style="left:807px;top:1031.6px" width="16" height="15" viewBox="0 0 16 15" fill="none" stroke="url(#cg)" stroke-width="3.5" stroke-linecap="round" stroke-linejoin="round"><path d="M2.5 7.8 L6.9 12.2 L13.7 2.3"/></svg>
<div class="row" style="top:1065px;height:45px"></div>
<span class="t dt" style="left:295.63px;top:1076.8px;transform:translateY(-50%) scaleX(0.9928);">16.12.2021</span>
<span class="t dn" style="left:295.93px;top:1096.9px;transform:translateY(-50%) scaleX(0.9127);">Čtvrtek</span>
<span class="t tot" style="left:895.41px;top:1077.1px;">0</span>
<span class="t tot" style="left:1408.41px;top:1077.1px;">0</span>
<div class="ssel" style="left:400px;top:1075px;width:75px"><i class="req"></i><i class="dd"></i></div>
<div class="inp" style="left:481px;top:1075px;width:80px"></div>
<div class="inp" style="left:566px;top:1075px;width:80px"></div>
<div class="inp" style="left:652px;top:1075px;width:144px"><i class="req"></i><i class="dd"></i></div>
<span class="t it" style="left:405.15px;top:1085.5px;transform:translateY(-50%) scaleX(0.8998);">Směna</span>
<span class="t it" style="left:487.03px;top:1085.5px;transform:translateY(-50%) scaleX(0.9349);">Start</span>
<span class="t it" style="left:571.99px;top:1085.5px;transform:translateY(-50%) scaleX(0.9334);">Konec</span>
<span class="t it" style="left:657.17px;top:1085.5px;transform:translateY(-50%) scaleX(0.9528);">Pracoviště</span>
<svg style="left:807px;top:1076.6px" width="16" height="15" viewBox="0 0 16 15" fill="none" stroke="url(#cg)" stroke-width="3.5" stroke-linecap="round" stroke-linejoin="round"><path d="M2.5 7.8 L6.9 12.2 L13.7 2.3"/></svg>
<div class="vl" style="left:394px"></div>
<div class="vl" style="left:850px"></div>
<div class="vl" style="left:907px"></div>
<div class="vl" style="left:1364px"></div>
<div class="vl" style="left:1420px"></div>
<svg style="left:405.2px;top:386.0px" width="9" height="9" viewBox="0 0 9 9"><path d="M0.8 0.8 L8.2 8.2 M8.2 0.8 L0.8 8.2" fill="none" stroke="#6f6f6f" stroke-width="1.15"/></svg>
<svg style="left:418.5px;top:385.0px" width="12" height="11" viewBox="0 0 12 11"><path d="M0.5 10.6 L1.3 7.2 L7.6 0.9 Q8.5 0.1 9.4 1 L10.6 2.2 Q11.4 3.1 10.6 4 L4.2 10 Z" fill="#787878"/><path d="M6.7 2.2 L9.4 4.9" stroke="#fff" stroke-width=".8"/><path d="M1.2 9.9 L1.7 8 L3.2 9.4 Z" fill="#e8e8e8"/></svg>
<svg style="left:434px;top:385.0px" width="12" height="11" viewBox="0 0 12 11"><path d="M0.6 0.6 H6.6 L9.2 3.2 V10.6 H0.6 Z M6.6 0.6 V3.2 H9.2" fill="#fcfcfc" stroke="#d8d8d8" stroke-width="1"/><path d="M2.2 4.6 H6.8 M2.2 6.6 H6.8 M2.2 8.6 H5 M4.4 4.6 V8.6 M5.8 8 L7.4 9.6 L11 5.4" fill="none" stroke="#d6d6d6" stroke-width="1"/></svg>
<span class="t sh" style="left:460.50px;top:387.6px;transform:translateY(-50%) scaleX(0.9520);">07:00 -</span>
<span class="t sh" style="left:504.05px;top:387.6px;transform:translateY(-50%) scaleX(0.9784);">10:00</span>
<span class="t sh" style="left:546.46px;top:387.6px;transform:translateY(-50%) scaleX(0.9240);">Operační sál 1</span>
<svg style="left:405.2px;top:410.40000000000003px" width="9" height="9" viewBox="0 0 9 9"><path d="M0.8 0.8 L8.2 8.2 M8.2 0.8 L0.8 8.2" fill="none" stroke="#6f6f6f" stroke-width="1.15"/></svg>
<svg style="left:418.5px;top:409.40000000000003px" width="12" height="11" viewBox="0 0 12 11"><path d="M0.5 10.6 L1.3 7.2 L7.6 0.9 Q8.5 0.1 9.4 1 L10.6 2.2 Q11.4 3.1 10.6 4 L4.2 10 Z" fill="#787878"/><path d="M6.7 2.2 L9.4 4.9" stroke="#fff" stroke-width=".8"/><path d="M1.2 9.9 L1.7 8 L3.2 9.4 Z" fill="#e8e8e8"/></svg>
<svg style="left:434px;top:409.40000000000003px" width="12" height="11" viewBox="0 0 12 11"><path d="M0.6 0.6 H6.6 L9.2 3.2 V10.6 H0.6 Z M6.6 0.6 V3.2 H9.2" fill="#fcfcfc" stroke="#d8d8d8" stroke-width="1"/><path d="M2.2 4.6 H6.8 M2.2 6.6 H6.8 M2.2 8.6 H5 M4.4 4.6 V8.6 M5.8 8 L7.4 9.6 L11 5.4" fill="none" stroke="#d6d6d6" stroke-width="1"/></svg>
<span class="t sh" style="left:460.06px;top:411.8px;transform:translateY(-50%) scaleX(0.9631);">13:00 -</span>
<span class="t sh" style="left:504.05px;top:411.8px;transform:translateY(-50%) scaleX(0.9784);">16:00</span>
<span class="t sh" style="left:546.45px;top:411.8px;transform:translateY(-50%) scaleX(0.9351);">Operační sálek</span>
<div class="abs" style="left:400px;top:400px;width:436px;height:1px;background:repeating-linear-gradient(90deg,#adadad 0,#adadad 1px,#dcdcdc 1px,#dcdcdc 2px)"></div>
<div class="inp" style="left:913px;top:377px;width:79.5px;height:21px"></div>
<div class="inp" style="left:998px;top:377px;width:79.5px;height:21px"></div>
<div class="inp" style="left:1084px;top:377px;width:230px;height:21px"><i class="req"></i><i class="dd"></i></div>
<span class="t it v" style="left:918.24px;top:388px;transform:translateY(-50%) scaleX(0.9484);">10:00</span>
<span class="t it v" style="left:1004.26px;top:388px;transform:translateY(-50%) scaleX(0.9267);">13:00</span>
<span class="t it v" style="left:1088.60px;top:388px;transform:translateY(-50%) scaleX(0.9229);">Lékař</span>
<svg style="left:1326.1px;top:379.2px" width="16" height="15" viewBox="0 0 16 15" fill="none" stroke="url(#cg)" stroke-width="3.5" stroke-linecap="round" stroke-linejoin="round"><path d="M2.5 7.8 L6.9 12.2 L13.7 2.3"/></svg>
<div id="vsb"><div class="th2"></div><svg style="left:5px;top:5px" width="6" height="3" viewBox="0 0 6 3"><path d="M0 3 L3 0 L6 3 Z" fill="#9a9a9a"/></svg><svg style="left:4.6px;top:871.4px" width="6.4" height="3.6" viewBox="0 0 9 5"><path d="M0 0 L4.5 5 L9 0 Z" fill="#505050"/></svg></div>
<div id="hsb"><svg style="left:4.5px;top:3.6px" width="3.6" height="6.4" viewBox="0 0 5 8"><path d="M5 0 L0 4 L5 8 Z" fill="#a3a3a3"/></svg><svg style="left:1637.4px;top:3.6px" width="3.6" height="6.4" viewBox="0 0 5 8"><path d="M0 0 L5 4 L0 8 Z" fill="#a3a3a3"/></svg></div>
<div id="corner"></div>
<svg style="left:0;top:0" width="1920" height="1080" viewBox="0 0 1920 1080"><path d="M1213.5 489 L1330.5 396" stroke="#000" stroke-width="2" fill="none"/></svg>
<div id="callout"></div>
<span class="t co" style="left:935.18px;top:536px;transform:translateY(-50%) scaleX(1.1153);">Nepřítomnost je</span>
<span class="t co" style="left:915.01px;top:579px;transform:translateY(-50%) scaleX(1.1393);">opět třeba potvrdit</span>
</div>
</body></html>
